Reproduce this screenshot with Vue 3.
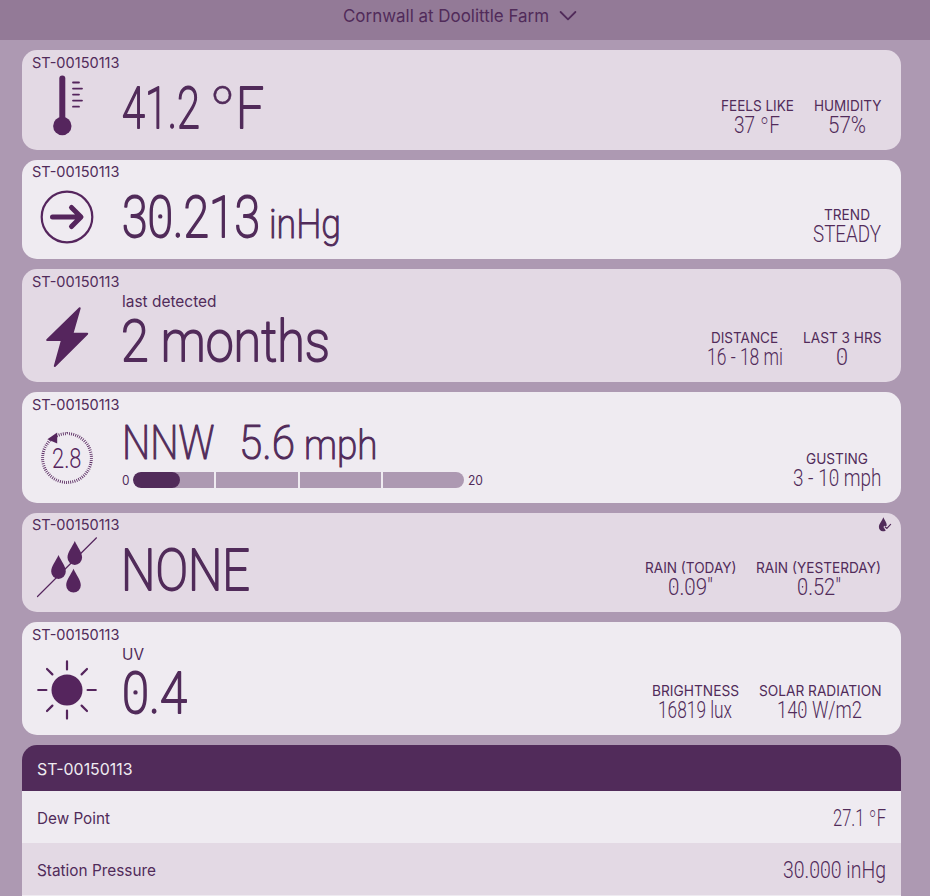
<template>
  <div class="page">
    <header class="topbar">
      <FitText class="sans" text="Cornwall at Doolittle Farm" :size="17.4" :width="206" />
      <svg class="chevron" width="18" height="12" viewBox="0 0 18 12"><path d="M1.6 2 9 9.4 16.4 2" /></svg>
    </header>

    <main class="cards">
      <section v-for="card in cards" :key="card.kind" class="card" :class="card.kind">
        <div class="serial"><FitText class="sans" :text="serial" :size="14.6" :width="87.5" /></div>

        <div class="body">
          <svg class="icon" width="60" height="60" viewBox="0 0 60 60">
            <g v-if="card.kind === 'temp'">
              <path class="line w6" d="M25.3 3.5V50" />
              <circle cx="25.3" cy="51" r="9.2" />
              <path class="line w2" d="M36 7.5h6M36 13.6h9M36 19.6h6M36 25.6h9M36 31.7h6" />
            </g>
            <g v-else-if="card.kind === 'pressure'">
              <circle class="line w25" cx="30" cy="33" r="25.3" />
              <path class="line w5" d="M15.5 33H43M34.5 23.5 44 33 34.5 42.5" />
            </g>
            <path v-else-if="card.kind === 'lightning'" class="bolt" d="M42.7 1.2 10.2 33H25L17.8 59 50.2 26.7H35.4Z" />
            <g v-else-if="card.kind === 'wind'">
              <circle class="ticks" cx="30" cy="30" r="24.4" pathLength="180" />
              <path d="M10.4 11.2 20.2 4.6V15.6Z" />
              <text class="gauge" x="15" y="40.3" font-size="27" textLength="29.5" lengthAdjust="spacingAndGlyphs">2.8</text>
            </g>
            <g v-else-if="card.kind === 'rain'">
              <path class="line w1" d="M0.5 59.5 59.5.8" />
              <path v-for="d in drops" :key="d" :transform="d" d="M0 0C2.6 5.8 7.3 11.2 7.3 16.6A7.3 7.3 0 0 1-7.3 16.6C-7.3 11.2-2.6 5.8 0 0Z" />
            </g>
            <g v-else>
              <circle cx="30" cy="30" r="15.5" />
              <path class="line w25" d="M30 1.4v8M30 50.6v8M1.2 30h8.2M50.6 30h8.2M10 9l5.4 5.4M50 9l-5.4 5.4M10 51l5.4-5.4M50 51l-5.4-5.4" />
            </g>
          </svg>

          <div class="reading">
            <FitText v-if="card.caption" class="sans caption" :text="card.caption" :size="16" :width="card.captionWidth" />
            <div class="value">
              <FitText v-for="p in card.parts" :key="p.text" class="display" :class="{ small: p.size < 50 }" :style="{ marginLeft: p.gap + 'px' }" :text="p.text" :size="p.size" :width="p.width" />
            </div>
            <div v-if="card.kind === 'wind'" class="scale">
              <FitText class="sans" text="0" :size="12.5" :width="7.5" />
              <div class="track">
                <span v-for="n in 4" :key="n" class="segment"></span>
                <span class="fill"></span>
              </div>
              <FitText class="sans" text="20" :size="12.5" :width="15" />
            </div>
          </div>

          <div class="stats">
            <div v-for="s in card.stats" :key="s.label" class="stat">
              <FitText class="sans" :text="s.label" :size="14.4" :width="s.labelWidth" />
              <FitText class="display tiny" :text="s.text" :size="23" :width="s.width" />
            </div>
          </div>
        </div>

        <svg v-if="card.kind === 'rain'" class="rain-check" width="14" height="15" viewBox="0 0 14 15">
          <path d="M5.3.3C6.4 3.2 8.8 5.6 8.8 8.4L7.4 9.6 6.5 8.8 5.4 10 7.8 13.4C4.2 15.8.9 13.4.9 10.1.9 6.8 4.3 3.8 5.3.3Z" />
          <path class="line w1" d="M7.2 10.1 8.9 11.4 12.6 7.4" />
        </svg>
      </section>

      <section class="table">
        <div class="table-head"><FitText class="sans" :text="serial" :size="16" :width="95.5" /></div>
        <div v-for="row in rows" :key="row.label" class="row">
          <FitText class="sans" :text="row.label" :size="16" :width="row.labelWidth" />
          <FitText class="display tiny" :text="row.text" :size="23" :width="row.width" />
        </div>
        <div class="row"></div>
      </section>
    </main>
  </div>
</template>

<script setup>
import { h, ref, onMounted } from 'vue'

// one line of text fitted to a width, baseline on the bottom edge
// display text gets a wide degree ring and dotted zeros
const FitText = {
  props: ['text', 'size', 'width'],
  setup(props, { attrs }) {
    const textEl = ref(null)
    const dots = ref([])

    onMounted(() => {
      if (!String(attrs.class).includes('display')) return
      const found = []
      for (let i = 0; i < props.text.length; i++) {
        if (props.text[i] !== '0') continue
        const box = textEl.value.getExtentOfChar(i)
        found.push(box.x + box.width / 2)
      }
      dots.value = found
    })

    return () => {
      const s = props.size
      const parts = props.text.split('°')
      const content = parts.length === 1 ? props.text : [
        h('tspan', parts[0]),
        h('tspan', { dy: s * 0.22, style: { fontSize: s * 1.3 + 'px', fontWeight: 100, strokeWidth: s > 30 ? '0.5px' : '0px' } }, '°'),
        h('tspan', { dy: -s * 0.22 }, parts[1])
      ]
      return h('svg', { width: props.width, height: s, overflow: 'visible' }, [
        h('text', {
          ref: textEl,
          y: s,
          'font-size': s,
          textLength: props.width,
          lengthAdjust: 'spacingAndGlyphs'
        }, content),
        dots.value.map((x) => h('circle', { cx: x, cy: s * 0.645, r: s > 30 ? 1.3 : 0.8 }))
      ])
    }
  }
}

const serial = 'ST-00150113'

const drops = ['translate(37.8 4)', 'translate(21.5 18)', 'translate(36.5 31.7)']

const cards = [
  {
    kind: 'temp',
    parts: [
      { text: '41.2', size: 58, width: 78, gap: -0.5 },
      { text: '°', size: 58, width: 29, gap: 8 },
      { text: 'F', size: 58, width: 28, gap: -1 }
    ],
    stats: [
      { label: 'FEELS LIKE', labelWidth: 73, text: '37 °F', width: 46 },
      { label: 'HUMIDITY', labelWidth: 67.5, text: '57%', width: 38 }
    ]
  },
  {
    kind: 'pressure',
    parts: [
      { text: '30.213', size: 58, width: 138, gap: -0.5 },
      { text: 'inHg', size: 41.5, width: 72, gap: 9.5 }
    ],
    stats: [{ label: 'TREND', labelWidth: 46, text: 'STEADY', width: 68 }]
  },
  {
    kind: 'lightning',
    caption: 'last detected',
    captionWidth: 94.5,
    parts: [{ text: '2 months', size: 57.5, width: 209, gap: -1 }],
    stats: [
      { label: 'DISTANCE', labelWidth: 67, text: '16 - 18 mi', width: 76 },
      { label: 'LAST 3 HRS', labelWidth: 78.5, text: '0', width: 12 }
    ]
  },
  {
    kind: 'wind',
    parts: [
      { text: 'NNW', size: 48, width: 92.5, gap: 0 },
      { text: '5.6', size: 48, width: 56, gap: 24.5 },
      { text: 'mph', size: 41.5, width: 73.5, gap: 9 }
    ],
    stats: [{ label: 'GUSTING', labelWidth: 62, text: '3 - 10 mph', width: 88.5 }]
  },
  {
    kind: 'rain',
    parts: [{ text: 'NONE', size: 58, width: 129, gap: -1 }],
    stats: [
      { label: 'RAIN (TODAY)', labelWidth: 91.5, text: '0.09"', width: 45 },
      { label: 'RAIN (YESTERDAY)', labelWidth: 125, text: '0.52"', width: 44 }
    ]
  },
  {
    kind: 'sun',
    caption: 'UV',
    captionWidth: 22,
    parts: [{ text: '0.4', size: 58, width: 65, gap: 0 }],
    stats: [
      { label: 'BRIGHTNESS', labelWidth: 87, text: '16819 lux', width: 74 },
      { label: 'SOLAR RADIATION', labelWidth: 122.5, text: '140 W/m2', width: 85 }
    ]
  }
]

const rows = [
  { label: 'Dew Point', labelWidth: 73, text: '27.1 °F', width: 53 },
  { label: 'Station Pressure', labelWidth: 119, text: '30.000 inHg', width: 103 }
]
</script>

<style>
body { margin: 0; overflow: hidden }
</style>

<style scoped>
.page { width: 930px; height: 896px; overflow: hidden; background: #ad99b2; color: #512b5a }
.page svg { display: block; flex: none; fill: currentColor }
.topbar { height: 40px; box-sizing: border-box; padding: 4.6px 11px 0 0; display: flex; justify-content: center; align-items: flex-start; gap: 10px; background: #937a97 }
.chevron { margin-top: 5px }
.chevron path { fill: none; stroke: currentColor; stroke-width: 1.8; stroke-linecap: round; stroke-linejoin: round }
.cards { padding: 10.3px 29px 0 22px; display: flex; flex-direction: column; gap: 10px }

.sans { font-family: Inter, sans-serif; font-weight: 400 }
.display { font-family: Roboto, sans-serif; font-weight: 200; stroke: currentColor; stroke-width: 1.8px; stroke-linejoin: round }
.small { stroke-width: 1.1px }
.tiny { font-weight: 300; stroke-width: 0 }

.card { position: relative; height: 99.4px; display: flex; flex-direction: column; border-radius: 15px; background: #e3d9e4 }
.card:nth-child(even) { background: #efebf1 }
.lightning, .sun { height: 113.2px }
.wind { height: 110.4px }
.serial { height: 17.3px; padding-left: 9.5px; display: flex; align-items: flex-end }
.body { flex: 1; min-height: 0; display: flex; align-items: flex-end }
.icon { margin: 0 25px 15px 15px; color: #55255d; overflow: visible }
.line { fill: none; stroke: currentColor; stroke-linecap: round; stroke-linejoin: round }
.w1 { stroke-width: 1.2 }
.w2 { stroke-width: 1.8 }
.w25 { stroke-width: 2.2 }
.w5 { stroke-width: 5 }
.w6 { stroke-width: 6 }
.bolt { stroke: currentColor; stroke-width: 2; stroke-linejoin: round }
.ticks { fill: none; stroke: currentColor; stroke-width: 3; stroke-dasharray: 1 1.5 }
.gauge { font-family: Roboto, sans-serif; font-weight: 300 }

.reading { flex: 1; padding-bottom: 22px }
.caption { margin-bottom: -5.5px }
.value { height: 59px; display: flex; align-items: flex-end }
.wind .reading { padding-bottom: 14.7px }
.wind .value { height: 49px; margin-bottom: 13.5px }
.scale { height: 15.5px; display: flex; align-items: center; gap: 3.5px }
.scale svg { margin-top: -4px }
.track { position: relative; width: 331px; height: 15.5px; display: flex; gap: 2px; border-radius: 8px; overflow: hidden }
.segment { flex: 1; background: #ad99b2 }
.fill { position: absolute; left: 0; top: 0; width: 47px; height: 100%; border-radius: 8px; background: #512b5a }

.stats { display: flex; gap: 20px; padding: 0 20px 17px 0 }
.stat { display: flex; flex-direction: column; align-items: center }
.stat .tiny { margin-top: -1.5px }
.rain-check { position: absolute; right: 9px; top: 4.5px }

.table { border-radius: 15px 15px 0 0; overflow: hidden }
.table-head { height: 46px; box-sizing: border-box; padding: 13.5px 15px 0; background: #512b5a; color: #efebf1 }
.row { height: 52px; box-sizing: border-box; padding: 0 15px; display: flex; align-items: center; justify-content: space-between; background: #efebf1 }
.row:nth-child(odd) { background: #e3d9e4 }
.row .sans { margin-bottom: 3px }
.row .tiny { margin-bottom: 5px }
</style>
